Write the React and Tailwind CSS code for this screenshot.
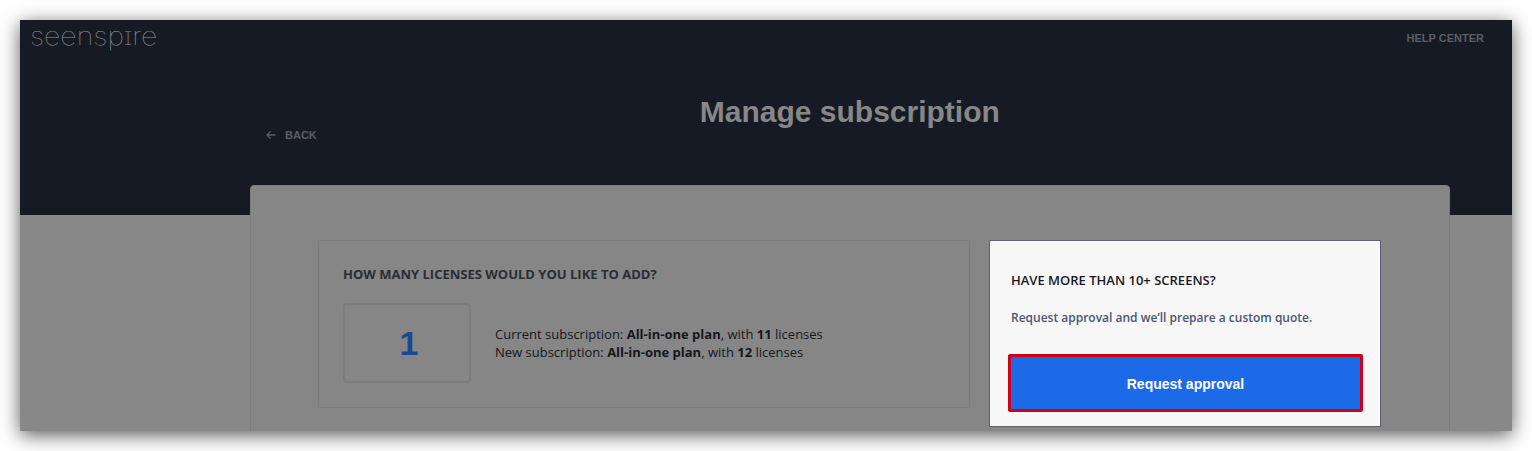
import React from "react";

const openSans = "font-['Open_Sans',sans-serif]";
const arial = "font-['Liberation_Sans',Arial,sans-serif]";

const App = () => {
  return (
    <div className="h-[451px] w-[1532px] overflow-hidden bg-white p-5">
      <div className="h-[411px] w-[1492px] overflow-hidden bg-[#888888] shadow-[0_4px_18px_rgba(0,0,0,0.65)]">
        {/* top band */}
        <div className="flex h-[195px] flex-col bg-[#151a25]">
          <div className="flex items-start justify-between pl-[10px] pr-7">
            <span className="mt-[4px] origin-left scale-x-[1.14] font-['Inter',sans-serif] text-[25px] leading-[24px] font-thin text-[#9a9b9f]">
              seen<span className="[font-variant-caps:small-caps]">spi</span>re
            </span>
            <a className={`${arial} mt-[11px] text-[11px] leading-[14px] font-bold text-[#5b5e65]`}>
              HELP CENTER
            </a>
          </div>
          <div className="mt-[5px] ml-[230px] flex w-[1200px] items-start">
            <a className={`${arial} mt-[75px] ml-4 flex items-center gap-[9px] text-[11px] leading-[14px] font-bold text-[#5b5e65]`}>
              <svg width="10" height="10" viewBox="0 0 10 10" fill="none" stroke="currentColor" strokeWidth="1.3">
                <path d="M9.5 5H1M4.6 1.4 1 5l3.6 3.6" />
              </svg>
              BACK
            </a>
            <h1 className={`${arial} mt-[39px] ml-[383px] text-[30px] leading-[40px] font-bold text-[#878787]`}>
              Manage subscription
            </h1>
          </div>
        </div>

        {/* card */}
        <div className="mt-[-30px] ml-[230px] flex h-[260px] w-[1200px] items-start rounded-t-[4px] border border-[#7e7e7e] bg-[#868686] pt-[54px] pl-[67px]">
          <div className={`${openSans} h-[168px] w-[652px] rounded-[3px] border border-[#7c7c7c] px-6 pt-[24px]`}>
            <h2 className="text-[13px] leading-[18px] font-bold text-[#2a2d35]">
              HOW MANY LICENSES WOULD YOU LIKE TO ADD?
            </h2>
            <div className="mt-[20px] flex items-center gap-6">
              <div className={`${arial} flex h-[80px] w-[128px] items-center justify-center rounded-[4px] border-2 border-[#7d7d7d] pl-[4px] text-[34px] font-bold text-[#174a92]`}>
                1
              </div>
              <p className="text-[13px] leading-[18px] text-[#15171c]">
                Current subscription: <b>All-in-one plan</b>, with <b>11</b> licenses
                <br />
                New subscription: <b>All-in-one plan</b>, with <b>12</b> licenses
              </p>
            </div>
          </div>

          <div className={`${openSans} ml-[19px] h-[187px] w-[392px] border border-[#5f6170] bg-[#f7f7f8] px-[21px] pt-[30px]`}>
            <h3 className="text-[13px] leading-[18px] font-semibold text-[#17191f]">
              HAVE MORE THAN 10+ SCREENS?
            </h3>
            <p className="mt-[20px] text-[12px] leading-[18px] font-semibold text-[#4d566b]">
              Request approval and we’ll prepare a custom quote.
            </p>
            <button className={`${arial} mt-[27px] -ml-[3px] h-[58px] w-[355px] rounded-[2px] border-[3px] border-[#cc0018] bg-[#1c6ae8] pt-[2px] text-[14px] font-bold text-white`}>
              Request approval
            </button>
          </div>
        </div>
      </div>
    </div>
  );
};

export default App;
